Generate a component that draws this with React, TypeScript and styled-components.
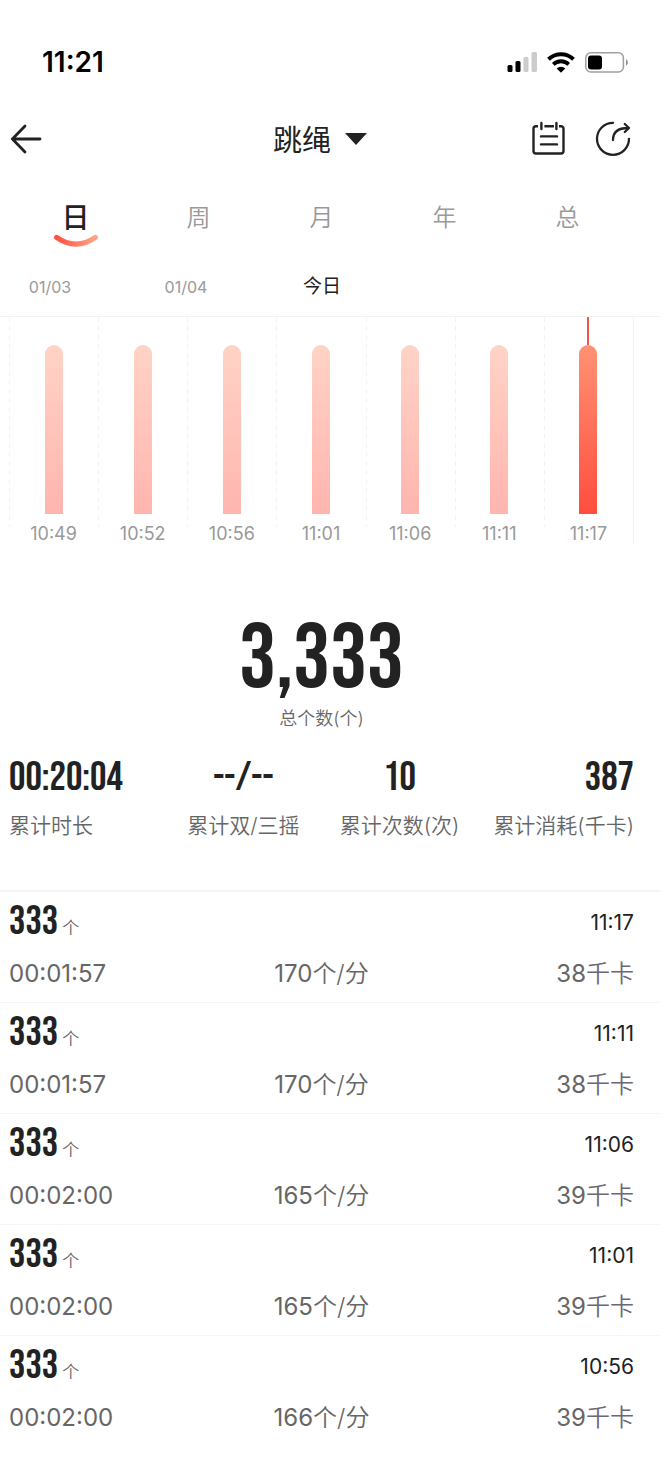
import React, { useState } from "react";
import styled, { createGlobalStyle } from "styled-components";

const sans = `Inter, "Noto Sans CJK SC", sans-serif`;
const condensed = `"Bebas Neue", "Roboto Condensed", "Liberation Sans Narrow", "Noto Sans CJK SC", sans-serif`;

const GlobalStyle = createGlobalStyle`
  *, *::before, *::after { box-sizing: border-box; }
  body { margin: 0; background: #fff; color: #222; font-family: ${sans}; }
  button { margin: 0; padding: 0; border: 0; background: none; color: inherit; font: inherit; cursor: pointer; }
  h1, p, ul, dl, dd { margin: 0; padding: 0; }
  ul { list-style: none; }
  svg { display: block; }
`;

const Page = styled.div`
  padding-right: 9px;
`;

const StatusBar = styled.div`
  display: flex;
  align-items: center;
  justify-content: space-between;
  height: 100px;
  padding: 24px 32px 0 42px;
  color: #000;
`;

const Clock = styled.span`
  font-size: 28px;
  line-height: 32px;
  font-weight: 600;
`;

const StatusIcons = styled.div`
  display: flex;
  align-items: center;
  gap: 10px;
`;

const Header = styled.header`
  display: grid;
  grid-template-columns: 1fr auto 1fr;
  align-items: center;
  height: 80px;
  padding: 0 29px 2px 9px;
`;

const Title = styled.h1`
  padding-top: 4px;
  font-size: 29px;
  line-height: 40px;
  font-weight: 400;
`;

const TitleButton = styled.button`
  display: flex;
  align-items: center;
  gap: 14px;
`;

const BackButton = styled.button`
  justify-self: start;
`;

const Actions = styled.div`
  display: flex;
  justify-self: end;
  gap: 30px;
`;

const Tabs = styled.nav`
  display: grid;
  grid-template-columns: repeat(5, 1fr);
  height: 80px;
  padding: 22px 31px 0 14px;
`;

const Tab = styled.button<{ $active: boolean }>`
  display: flex;
  flex-direction: column;
  align-items: center;
  font-size: ${(p) => (p.$active ? 28 : 24)}px;
  line-height: 32px;
  font-weight: ${(p) => (p.$active ? 500 : 350)};
  color: ${(p) => (p.$active ? "#222" : "#999")};
`;

const Dates = styled.div`
  display: flex;
  align-items: center;
  gap: 54px;
  height: 56px;
  padding: 0 0 2px 9px;
`;

const DateButton = styled.button<{ $active: boolean }>`
  width: 82px;
  font-size: ${(p) => (p.$active ? 19 : 16)}px;
  line-height: 28px;
  color: ${(p) => (p.$active ? "#222" : "#999")};
`;

const Chart = styled.div`
  padding: 0 26px 0 9px;
  border-top: 1px solid #f2f2f2;
`;

const Columns = styled.ul`
  display: grid;
  grid-template-columns: repeat(7, 1fr);
  border-right: 1px solid #f2f2f2;
`;

const Column = styled.li`
  display: flex;
  flex-direction: column;
  align-items: center;
  height: 228px;
  background: repeating-linear-gradient(#f3f3f3 0 5px, transparent 5px 9px) 0 0 / 1px 210px no-repeat;
`;

const Marker = styled.span<{ $on: boolean }>`
  width: 2px;
  height: 28px;
  background: ${(p) => (p.$on ? "#f4554a" : "transparent")};
`;

const Bar = styled.span<{ $on: boolean }>`
  width: 18px;
  height: 169px;
  border-radius: 9px 9px 0 0;
  background: ${(p) =>
    p.$on ? "linear-gradient(#ff9274, #ff4d3f)" : "linear-gradient(#ffd3c7, #ffb5af)"};
`;

const BarLabel = styled.span`
  margin-top: 9px;
  font-size: 18px;
  line-height: 22px;
  color: #999;
`;

const Total = styled.section`
  display: flex;
  flex-direction: column;
  align-items: center;
  padding: 68px 26px 0 9px;
`;

const TotalValue = styled.p`
  font-family: ${condensed};
  font-size: 92px;
  line-height: 94px;
`;

const TotalLabel = styled.p`
  font-size: 18px;
  line-height: 24px;
  font-weight: 350;
  color: #666;
`;

const Stats = styled.dl`
  display: grid;
  grid-template-columns: repeat(4, 1fr);
  height: 159px;
  padding: 23px 26px 0 9px;
`;

const Stat = styled.div`
  display: flex;
  flex-direction: column-reverse;
  justify-content: flex-end;
  align-items: center;
  gap: 8px;
  white-space: nowrap;
  &:first-child { align-items: flex-start; }
  &:last-child { align-items: flex-end; }
`;

const StatLabel = styled.dt`
  font-size: 21px;
  line-height: 32px;
  font-weight: 350;
  color: #666;
`;

const StatValue = styled.dd`
  font-family: ${condensed};
  font-size: 41px;
  line-height: 48px;
`;

const Records = styled.ul`
  border-top: 2px solid #f5f5f5;
`;

const Record = styled.li`
  height: 111px;
  padding: 10px 26px 0 9px;
  border-bottom: 1px solid #f5f5f5;
  &:last-child { border-bottom: 0; }
`;

const RecordTop = styled.div`
  display: flex;
  align-items: flex-start;
  justify-content: space-between;
  height: 44px;
`;

const Count = styled.p`
  display: flex;
  align-items: baseline;
  gap: 4px;
  line-height: 40px;
`;

const CountValue = styled.strong`
  font-family: ${condensed};
  font-size: 41px;
  font-weight: 400;
`;

const CountUnit = styled.span`
  font-size: 17px;
  font-weight: 350;
  color: #666;
`;

const Time = styled.time`
  font-size: 21px;
  line-height: 42px;
`;

const RecordDetail = styled.div`
  display: grid;
  grid-template-columns: 1fr auto 1fr;
  margin-top: 10px;
  font-size: 24px;
  line-height: 36px;
  color: #666;
`;

const Energy = styled.span`
  justify-self: end;
`;

const EnergyUnit = styled.span`
  font-weight: 350;
  color: #6b6678;
`;

const Light = styled.span`
  font-weight: 350;
`;

const periods = ["日", "周", "月", "年", "总"];
const dates = ["01/03", "01/04", "今日"];
const bars = ["10:49", "10:52", "10:56", "11:01", "11:06", "11:11", "11:17"];
const stats = [
  { label: "累计时长", value: "00:20:04" },
  { label: "累计双/三摇", value: "--/--" },
  { label: "累计次数(次)", value: "10" },
  { label: "累计消耗(千卡)", value: "387" },
];
const records = [
  { time: "11:17", length: "00:01:57", pace: 170, energy: 38 },
  { time: "11:11", length: "00:01:57", pace: 170, energy: 38 },
  { time: "11:06", length: "00:02:00", pace: 165, energy: 39 },
  { time: "11:01", length: "00:02:00", pace: 165, energy: 39 },
  { time: "10:56", length: "00:02:00", pace: 166, energy: 39 },
];

const SignalIcon = () => (
  <svg width="30" height="20" viewBox="0 0 30 20">
    <rect x="0.5" y="13" width="5" height="7" rx="1.5" />
    <rect x="8.5" y="9" width="5" height="11" rx="1.5" />
    <rect x="16.5" y="5" width="5" height="15" rx="1.5" fill="#ccc" />
    <rect x="24.5" y="0" width="5.5" height="20" rx="1.5" fill="#ccc" />
  </svg>
);

const WifiIcon = () => (
  <svg width="28" height="21" viewBox="0 0 28 21">
    <path d="M1.5 7.2a18 18 0 0 1 25 0" fill="none" stroke="#000" strokeWidth="4" />
    <path d="M6.3 12.3a11.2 11.2 0 0 1 15.4 0" fill="none" stroke="#000" strokeWidth="3.8" />
    <path d="M9.7 16.4a6.2 6.2 0 0 1 8.6 0L14 20.8z" />
  </svg>
);

const BatteryIcon = () => (
  <svg width="43" height="21" viewBox="0 0 43 21">
    <rect x="0.8" y="0.8" width="37.6" height="19.2" rx="5" fill="none" stroke="#a0a0a0" strokeWidth="1.5" />
    <rect x="3" y="3.4" width="14" height="14" rx="3" />
    <path d="M41 7.2c2.4 1.2 2.4 5.2 0 6.4z" fill="#8f8f8f" />
  </svg>
);

const BackIcon = () => (
  <svg width="34" height="32" viewBox="0 0 34 32" fill="none" stroke="#222" strokeWidth="2.8" strokeLinecap="round" strokeLinejoin="round">
    <path d="M16 3 3.4 16 16 29M3.4 16H31" />
  </svg>
);

const CaretIcon = () => (
  <svg width="22" height="12" viewBox="0 0 22 12">
    <path d="M0 0h22L11 12z" fill="#222" />
  </svg>
);

const CalendarIcon = () => (
  <svg width="34" height="36" viewBox="0 0 34 36" fill="none" stroke="#222" strokeWidth="2.4">
    <path d="M7 5.2H5a2.5 2.5 0 0 0-2.5 2.5V30A2.5 2.5 0 0 0 5 32.5h25A2.5 2.5 0 0 0 32.5 30V7.7A2.5 2.5 0 0 0 30 5.2h-2M13.4 5.2h9.6" />
    <path d="M10.4 2v6M25.4 2v6M10 15.4h16M10 23.4h16" strokeLinecap="round" />
  </svg>
);

const ShareIcon = () => (
  <svg width="36" height="36" viewBox="0 0 36 36" fill="none" stroke="#222" strokeWidth="2.3" strokeLinecap="round" strokeLinejoin="round">
    <path d="M18 1.8A16 16 0 1 0 34 17.8" />
    <path d="M18 19c0-8 5.5-12 15-12M29.8 3l4.2 4-4.2 4" />
  </svg>
);

const TabArc = () => (
  <svg width="44" height="14" viewBox="0 0 44 14">
    <defs>
      <linearGradient id="arc" x1="0" x2="1" y1="0" y2="0">
        <stop offset="0" stopColor="#ff4f42" />
        <stop offset="1" stopColor="#ffa585" />
      </linearGradient>
    </defs>
    <path d="M2.6 3.4Q22 16.8 41.4 3.4" fill="none" stroke="url(#arc)" strokeWidth="5" strokeLinecap="round" />
  </svg>
);

export default function App() {
  const [period, setPeriod] = useState(0);
  const [date, setDate] = useState(2);
  const [bar] = useState(6);

  return (
    <>
      <GlobalStyle />
      <Page>
        <StatusBar>
          <Clock>11:21</Clock>
          <StatusIcons>
            <SignalIcon />
            <WifiIcon />
            <BatteryIcon />
          </StatusIcons>
        </StatusBar>
        <Header>
          <BackButton aria-label="返回"><BackIcon /></BackButton>
          <TitleButton>
            <Title>跳绳</Title>
            <CaretIcon />
          </TitleButton>
          <Actions>
            <button aria-label="日历"><CalendarIcon /></button>
            <button aria-label="分享"><ShareIcon /></button>
          </Actions>
        </Header>
        <Tabs>
          {periods.map((name, i) => (
            <Tab key={name} $active={i === period} onClick={() => setPeriod(i)}>
              {name}
              {i === period && <TabArc />}
            </Tab>
          ))}
        </Tabs>
        <Dates>
          {dates.map((name, i) => (
            <DateButton key={name} $active={i === date} onClick={() => setDate(i)}>
              {name}
            </DateButton>
          ))}
        </Dates>
        <Chart>
          <Columns>
            {bars.map((label, i) => (
              <Column key={label}>
                <Marker $on={i === bar} />
                <Bar $on={i === bar} />
                <BarLabel>{label}</BarLabel>
              </Column>
            ))}
          </Columns>
        </Chart>
        <Total>
          <TotalValue>3,333</TotalValue>
          <TotalLabel>总个数(个)</TotalLabel>
        </Total>
        <Stats>
          {stats.map((s) => (
            <Stat key={s.label}>
              <StatLabel>{s.label}</StatLabel>
              <StatValue>{s.value}</StatValue>
            </Stat>
          ))}
        </Stats>
        <Records>
          {records.map((r) => (
            <Record key={r.time}>
              <RecordTop>
                <Count>
                  <CountValue>333</CountValue>
                  <CountUnit>个</CountUnit>
                </Count>
                <Time>{r.time}</Time>
              </RecordTop>
              <RecordDetail>
                <span>{r.length}</span>
                <span>{r.pace}<Light>个/分</Light></span>
                <Energy>{r.energy}<EnergyUnit>千卡</EnergyUnit></Energy>
              </RecordDetail>
            </Record>
          ))}
        </Records>
      </Page>
    </>
  );
}
